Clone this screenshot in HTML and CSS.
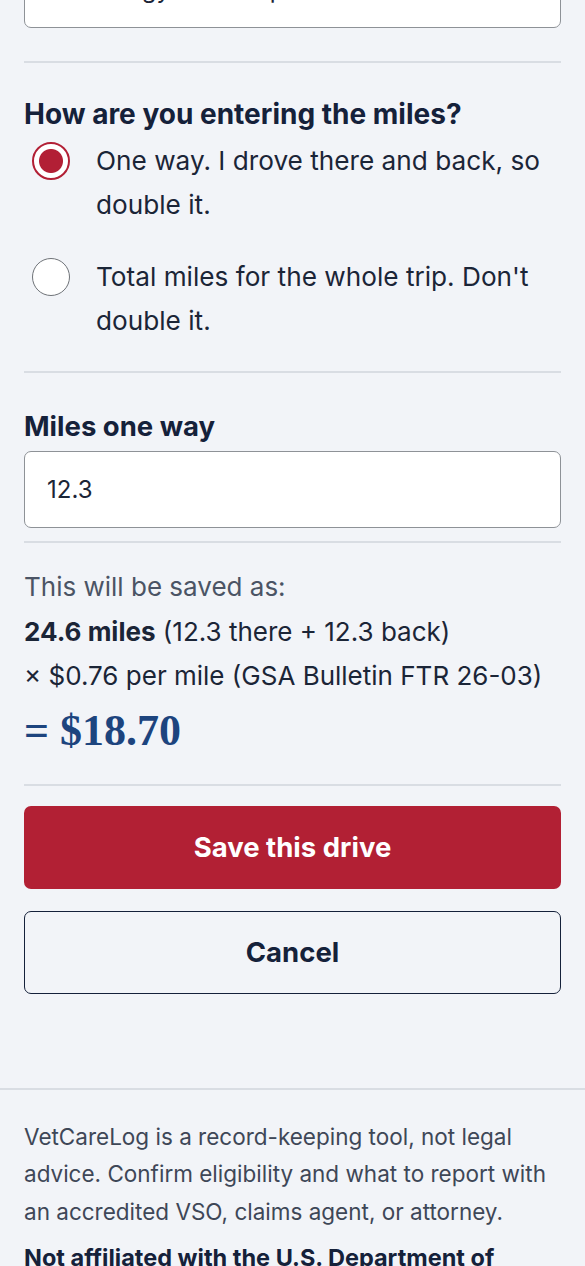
FILE: index.html
```html
<!DOCTYPE html>
<html lang="en">
<head>
<meta charset="utf-8">
<title>Add a drive</title>
<link rel="stylesheet" href="styles.css">
</head>
<body>
<main class="form">
  <div class="text-input trip-input">Cardiology follow-up</div>
  <hr class="divider">
  <fieldset class="choice">
    <legend class="label">How are you entering the miles?</legend>
    <label class="radio-row">
      <span class="radio checked"></span>
      <span class="radio-text">One way. I drove there and back, so double it.</span>
    </label>
    <label class="radio-row">
      <span class="radio"></span>
      <span class="radio-text">Total miles for the whole trip. Don't double it.</span>
    </label>
  </fieldset>
  <hr class="divider">
  <div class="field">
    <div class="label">Miles one way</div>
    <div class="text-input">12.3</div>
  </div>
  <hr class="divider tight">
  <section class="summary">
    <p class="muted">This will be saved as:</p>
    <p><strong>24.6 miles</strong> (12.3 there + 12.3 back)</p>
    <p>× $0.76 per mile (GSA Bulletin FTR 26-03)</p>
    <p class="total">= $18.70</p>
  </section>
  <hr class="divider">
  <div class="actions">
    <button class="btn btn-primary">Save this drive</button>
    <button class="btn btn-outline">Cancel</button>
  </div>
</main>
<footer class="footer">
  <p>VetCareLog is a record-keeping tool, not legal advice. Confirm eligibility and what to report with an accredited VSO, claims agent, or attorney.</p>
  <p class="strong">Not affiliated with the U.S. Department of Veterans Affairs.</p>
</footer>
</body>
</html>
```
FILE: styles.css
```css
* { box-sizing: border-box; }
html, body { margin: 0; padding: 0; }
body {
  background: #f2f4f8;
  color: #1b2537;
  font-family: Inter, "Noto Sans", "Liberation Sans", sans-serif;
  font-size: 26px;
  overflow: hidden;
  height: 1266px;
}
.form {
  padding: 0 24px;
}
.text-input {
  height: 77px;
  background: #fff;
  border: 1.5px solid #8e9297;
  border-radius: 7px;
  display: flex;
  align-items: center;
  padding: 0 22px;
  font-size: 24px;
  color: #1b2537;
}
.trip-input {
  margin-top: -49px;
}
.divider {
  border: 0;
  height: 2px;
  background: #d9dde3;
  margin: 33px 0 0;
}
.choice {
  border: 0;
  margin: 0;
  padding: 0;
  padding-top: 35px;
}
.label {
  font-weight: 700;
  font-size: 27.5px;
  line-height: 32px;
  padding: 0;
  color: #15213a;
}
.choice .label { margin-bottom: 9px; float: left; width: 100%; font-size: 28px; }
.radio-row {
  clear: both;
  display: flex;
  gap: 26px;
  align-items: flex-start;
  margin-bottom: 28px;
  padding-left: 8px;
}
.radio-row:last-child { margin-bottom: 0; }
.radio {
  flex: none;
  width: 38px;
  height: 38px;
  margin-top: 3px;
  border-radius: 50%;
  background: #fff;
  border: 1.5px solid #6f7378;
}
.radio.checked {
  border: 2px solid #b21f35;
  background: radial-gradient(circle, #b21f35 0 11.5px, #fff 12.5px);
}
.radio-text {
  line-height: 44px;
  font-size: 26.2px;
}
.choice + .divider { margin-top: 28px; }
.field {
  padding-top: 37px;
  display: flex;
  flex-direction: column;
  gap: 9px;
}
.divider.tight { margin-top: 13px; }
.summary {
  padding-top: 22px;
}
.summary p {
  margin: 0;
  line-height: 44.5px;
  font-size: 26px;
}
.summary .muted { color: #4b5465; }
.summary strong { font-weight: 700; }
.summary .total {
  font-family: "Liberation Serif", "DejaVu Serif", serif;
  font-weight: 700;
  color: #1d447e;
  font-size: 44px;
  line-height: 60px;
  margin-top: 2px;
}
.summary + .divider { margin-top: 23px; }
.actions {
  padding-top: 20px;
  display: flex;
  flex-direction: column;
  gap: 22px;
}
.btn {
  height: 83px;
  border-radius: 7px;
  font-family: inherit;
  font-size: 27.5px;
  font-weight: 700;
  width: 100%;
}
.btn-primary {
  background: #b22034;
  color: #fff;
  border: 0;
}
.btn-outline {
  background: transparent;
  color: #15213a;
  border: 1.5px solid #15213a;
}
.footer {
  margin-top: 94px;
  border-top: 2px solid #d9dde3;
  padding: 28px 24px 0;
}
.footer p {
  margin: 0;
  font-size: 22.5px;
  line-height: 37.5px;
  color: #3e4757;
}
.footer p.strong {
  margin-top: 14px;
  font-size: 23.5px;
  font-weight: 700;
  color: #15213a;
  line-height: 28px;
}
```
